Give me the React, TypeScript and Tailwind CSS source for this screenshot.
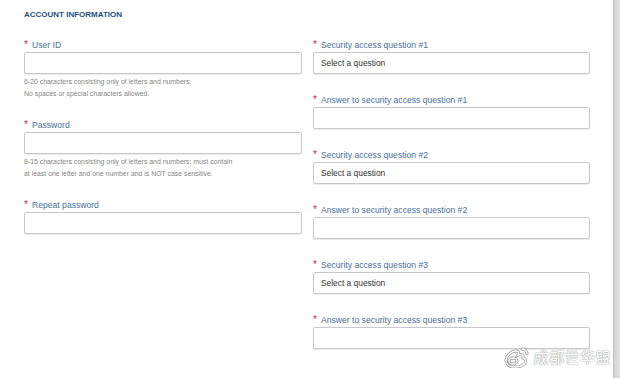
import React from 'react';

const Label = ({ text }: { text: string }) => (
    <div className="flex h-[11px] items-start leading-[11px]">
        <span className="mr-[3px] w-[5px] text-[10px] leading-[10px] text-[#c8283c]">*</span>
        <span className="text-[8.6px] text-[#48709a]">{text}</span>
    </div>
);

const Box = ({ placeholder }: { placeholder?: string }) => (
    <div className="flex h-[22px] items-center rounded-[2px] border border-[#c9c9c9] bg-white px-[7px] text-[8.4px] text-[#333] shadow-[0_1px_0_#ececec]">
        {placeholder}
    </div>
);

const Field = ({ label, placeholder }: { label: string; placeholder?: string }) => (
    <div className="flex flex-col gap-px">
        <Label text={label} />
        <Box placeholder={placeholder} />
    </div>
);

const Help = ({ lines }: { lines: string[] }) => (
    <div className="mt-[2px] text-[6.9px] leading-[12px] text-[#858585]">
        {lines.map((l) => (
            <div key={l}>{l}</div>
        ))}
    </div>
);

const WeiboMark = () => (
    <svg width="28" height="22" viewBox="0 0 28 22" fill="none">
        <g stroke="#9a9a9a" strokeWidth="3" strokeLinecap="round">
            <path d="M4 14c0-4 5-9 10-9 3 0 3 2 2 4 3-1 6 0 5 3 3 1 3 3 2 5-2 3-7 4-11 4-5 0-8-3-8-7z" />
            <ellipse cx="11" cy="15" rx="4" ry="3" />
            <path d="M20 3a5 5 0 0 1 5 5" />
        </g>
        <g stroke="#ffffff" strokeWidth="1.4" strokeLinecap="round">
            <path d="M4 14c0-4 5-9 10-9 3 0 3 2 2 4 3-1 6 0 5 3 3 1 3 3 2 5-2 3-7 4-11 4-5 0-8-3-8-7z" />
            <ellipse cx="11" cy="15" rx="4" ry="3" />
            <path d="M20 3a5 5 0 0 1 5 5" />
        </g>
    </svg>
);

export default function App() {
    return (
        <div className="flex h-[378px] w-[620px] overflow-hidden bg-white font-['Liberation_Sans',Arial,sans-serif]">
            <div className="relative flex-1 pl-[24px] pr-[23px] pt-[10px]">
                <h3 className="h-[30px] text-[8px] font-bold leading-[10px] text-[#24507e]">
                    ACCOUNT INFORMATION
                </h3>
                <div className="grid grid-cols-[278px_277px] gap-x-[11px]">
                    <div className="flex flex-col">
                        <Field label="User ID" />
                        <Help
                            lines={[
                                '6-20 characters consisting only of letters and numbers.',
                                'No spaces or special characters allowed.',
                            ]}
                        />
                        <div className="mt-[20px]">
                            <Field label="Password" />
                        </div>
                        <Help
                            lines={[
                                '8-15 characters consisting only of letters and numbers: must contain',
                                'at least one letter and one number and is NOT case sensitive.',
                            ]}
                        />
                        <div className="mt-[20px]">
                            <Field label="Repeat password" />
                        </div>
                    </div>
                    <div className="flex flex-col gap-[21px]">
                        <Field label="Security access question #1" placeholder="Select a question" />
                        <Field label="Answer to security access question #1" />
                        <Field label="Security access question #2" placeholder="Select a question" />
                        <Field label="Answer to security access question #2" />
                        <Field label="Security access question #3" placeholder="Select a question" />
                        <Field label="Answer to security access question #3" />
                    </div>
                </div>
                <div className="absolute bottom-[10px] right-[2px] flex items-center gap-[3px]">
                    <WeiboMark />
                    <span className="font-['Noto_Sans_CJK_SC',sans-serif] text-[15px] leading-[18px] tracking-[0.5px] text-white [text-shadow:0_0_1px_#999,0_0_2px_#aaa]">
                        成都世华盟
                    </span>
                </div>
            </div>
            <div className="w-[7px] border-l border-[#c2c2c2] bg-linear-to-r from-[#d2d2d2] to-[#e2e2e2]" />
        </div>
    );
}
